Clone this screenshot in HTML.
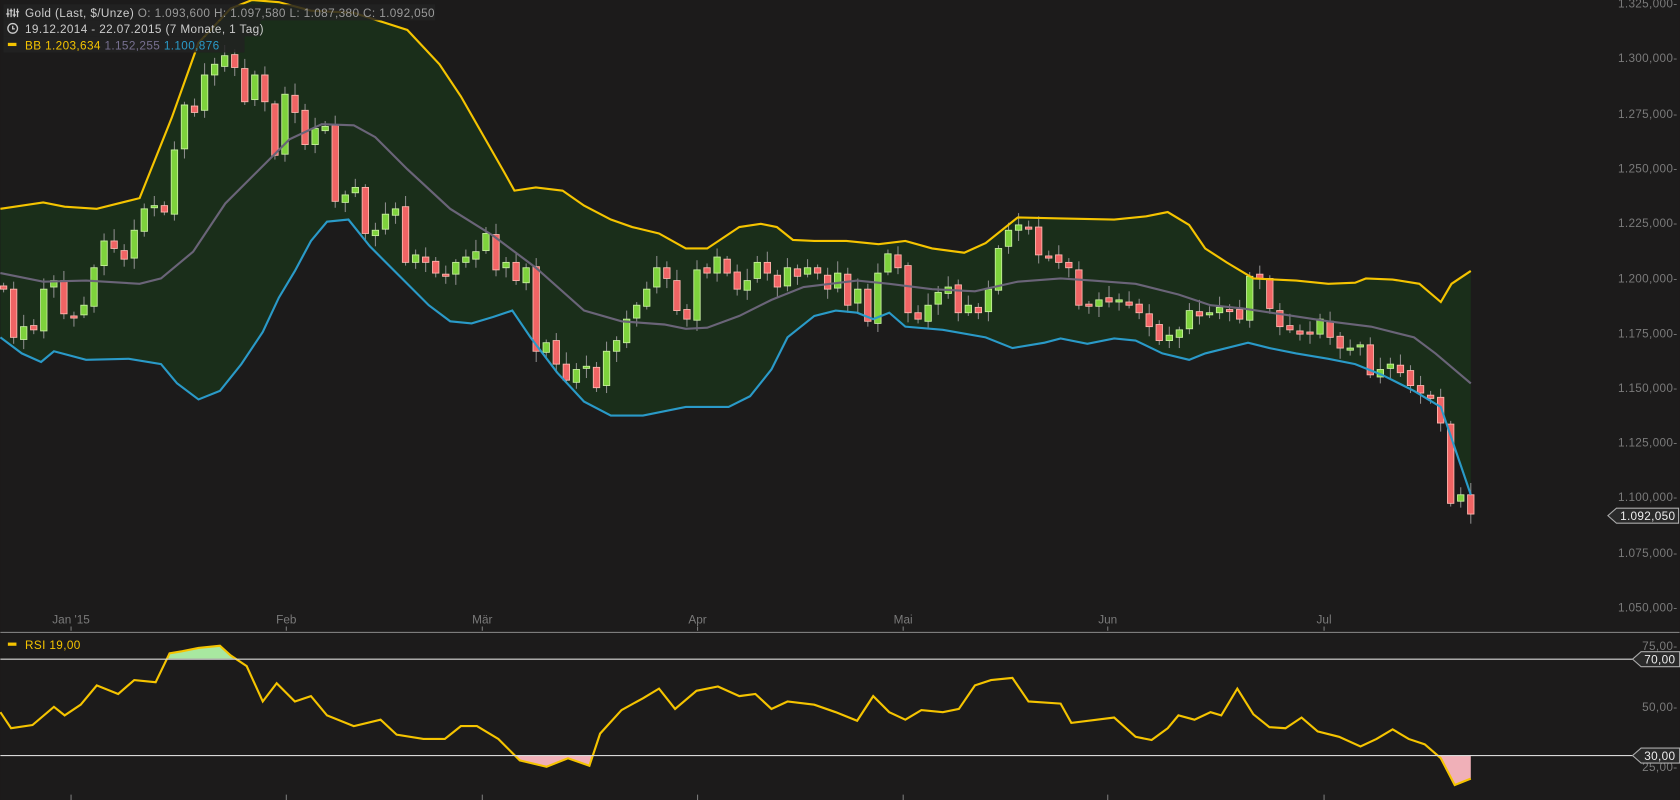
<!DOCTYPE html>
<html><head><meta charset="utf-8"><style>
html,body{margin:0;padding:0;background:#1c1b1b;overflow:hidden}
svg{display:block}
text{font-family:"Liberation Sans",sans-serif;}
</style></head><body>
<svg id="s" width="1680" height="800" viewBox="0 0 1568 747" xmlns="http://www.w3.org/2000/svg">
<rect width="1568" height="747" fill="#1c1b1b"/>
<g id="g"></g>
<line x1="0" y1="590.5" x2="1568" y2="590.5" stroke="#8a8a8a" stroke-width="1"/>
<line x1="0" y1="615.5" x2="1528" y2="615.5" stroke="#d8d8d8" stroke-width="1"/>
<line x1="0" y1="705.5" x2="1528" y2="705.5" stroke="#d8d8d8" stroke-width="1"/>
<g fill="#7a7a7a" font-size="11" text-anchor="end" letter-spacing="0.3">
<text x="1566" y="7">1.325,000-</text>
<text x="1566" y="58">1.300,000-</text>
<text x="1566" y="110">1.275,000-</text>
<text x="1566" y="161">1.250,000-</text>
<text x="1566" y="212">1.225,000-</text>
<text x="1566" y="264">1.200,000-</text>
<text x="1566" y="315">1.175,000-</text>
<text x="1566" y="366">1.150,000-</text>
<text x="1566" y="417">1.125,000-</text>
<text x="1566" y="468">1.100,000-</text>
<text x="1566" y="520">1.075,000-</text>
<text x="1566" y="571">1.050,000-</text>
<text x="1566" y="607">75,00-</text>
<text x="1566" y="664">50,00-</text>
<text x="1566" y="720">25,00-</text>
</g>
<g fill="#7a7a7a" font-size="11" text-anchor="middle">
<text x="66" y="582">Jan '15</text><text x="267" y="582">Feb</text><text x="450" y="582">Mär</text>
<text x="651" y="582">Apr</text><text x="843" y="582">Mai</text><text x="1034" y="582">Jun</text><text x="1236" y="582">Jul</text>
</g>
<g stroke="#7a7a7a"><path d="M66 585v4M267 585v4M450 585v4M651 585v4M843 585v4M1034 585v4M1236 585v4M66 742v5M267 742v5M450 742v5M651 742v5M843 742v5M1034 742v5M1236 742v5"/></g>
<g font-size="11" letter-spacing="0.3">
<path d="M1501 481.5l8-7h58v14h-58z" fill="#2a2a2a" stroke="#aaa"/>
<text x="1564" y="485.5" fill="#eee" text-anchor="end">1.092,050</text>
<path d="M1524 615.5l8-7h36v14h-36z" fill="#2a2a2a" stroke="#aaa"/>
<text x="1564" y="619.5" fill="#eee" text-anchor="end">70,00</text>
<path d="M1524 705.5l8-7h36v14h-36z" fill="#2a2a2a" stroke="#aaa"/>
<text x="1564" y="709.5" fill="#eee" text-anchor="end">30,00</text>
</g>
<rect x="3" y="4" width="403" height="15" fill="#222" fill-opacity="0.85"/>
<rect x="3" y="19" width="240" height="15" fill="#222" fill-opacity="0.85"/>
<rect x="3" y="34" width="225" height="15" fill="#222" fill-opacity="0.85"/>
<g font-size="11" letter-spacing="0.35">
<g stroke="#ccc" stroke-width="1.2" fill="none"><path d="M7 8v8M10 8v8M13 8v8M16 8v8M5.5 13h3M8.5 10h3M11.5 14h3M14.5 11h3"/><circle cx="11.5" cy="26.5" r="4.5"/><path d="M11.5 24v3h2"/></g>
<text x="23" y="16" fill="#ccc">Gold (Last, $/Unze)  <tspan fill="#9a9a9a">O: 1.093,600  H: 1.097,580  L: 1.087,380  C: 1.092,050</tspan></text>
<text x="23" y="31" fill="#ccc">19.12.2014 - 22.07.2015 (7 Monate, 1 Tag)</text>
<rect x="7" y="40" width="8" height="3" fill="#f5c400"/>
<text x="23" y="46" fill="#f5c400">BB  1.203,634  <tspan fill="#777090">1.152,255</tspan>  <tspan fill="#2a9ac8">1.100,876</tspan></text>
<rect x="7" y="600" width="8" height="3" fill="#f5c400"/>
<text x="23" y="606" fill="#f5c400">RSI  19,00</text>
</g>
</svg>
<script>
var N="http://www.w3.org/2000/svg",g=document.getElementById('g');
function el(t,a){var e=document.createElementNS(N,t);for(var k in a)e.setAttribute(k,a[k]);g.appendChild(e);return e;}
function P(a){var r=[];for(var i=0;i<a.length;i+=2)r.push([a[i],a[i+1]]);return r;}
var up=P([0,195,40,189,60,193,90,195,130,185,160,110,185,40,215,8,235,0,260,2,290,10,330,12,380,28,410,60,430,90,450,125,470,160,480,178,500,175,525,178,545,192,570,205,590,212,615,218,640,232,660,232,690,212,710,209,725,212,740,224,760,225,790,225,820,228,845,225,870,232,900,236,920,227,950,203,990,204,1040,205,1070,202,1090,198,1110,210,1125,232,1145,245,1170,260,1210,262,1240,265,1265,264,1275,260,1300,261,1325,265,1345,282,1355,265,1373,253]);
var mid=P([0,255,40,263,80,262,130,265,150,260,180,235,210,190,240,160,270,130,300,116,330,117,350,128,380,158,420,195,460,220,500,250,545,290,580,300,620,303,640,307,660,306,690,295,720,280,750,268,800,262,830,265,870,270,910,272,950,263,990,260,1020,262,1060,265,1100,275,1130,285,1160,288,1200,294,1240,300,1280,305,1320,315,1340,330,1373,358]);
var lo=P([0,315,20,330,38,338,50,328,80,336,120,335,150,340,165,358,185,373,205,365,225,340,245,310,260,278,275,253,290,225,305,207,325,205,345,230,370,255,400,285,420,300,440,302,460,296,478,290,495,315,520,348,545,375,570,388,600,388,640,380,680,380,700,370,720,345,735,315,760,295,780,290,800,292,815,298,830,292,845,305,880,308,920,315,945,325,975,320,990,316,1015,321,1040,316,1060,318,1085,330,1110,336,1125,330,1165,320,1185,325,1210,330,1240,335,1265,340,1290,350,1320,365,1345,380,1373,462]);
function s(p){return p.map(function(q){return q[0]+','+q[1]}).join(' ');}
el('polygon',{points:s(up)+' '+s(lo.slice().reverse()),fill:'#1a2e1a'});
var c=[270,315,305,308,270,262,293,295,285,250,225,232,242,215,195,192,198,140,98,105,70,60,52,63,95,70,95,145,88,105,135,120,118,188,182,175,218,215,200,195,245,238,245,255,258,245,240,235,218,252,245,262,250,328,320,340,355,345,342,362,328,318,298,285,270,250,260,290,298,252,255,240,255,270,262,245,255,268,250,258,250,255,270,255,285,270,300,255,237,250,292,298,285,273,268,292,285,292,270,232,215,210,213,238,240,245,250,285,285,280,282,280,285,292,305,318,313,308,290,295,292,287,290,298,258,260,288,305,308,312,312,298,315,325,325,322,350,345,340,348,360,367,372,395,470,462,480];
var dx=1370/(c.length-1);
for(var i=0;i<c.length;i++){
 var x=3+i*dx,o=i?c[i-1]+((i*7)%5-2):c[0]-3,cl=c[i];
 var t=Math.min(o,cl),b=Math.max(o,cl);if(b-t<2){b=t+2;}
 var w1=3+(i*13)%9,w2=3+(i*11)%8;
 el('line',{x1:x,y1:t-w1,x2:x,y2:b+w2,stroke:'#8a8a8a','stroke-width':1});
 var gr=cl<o;
 el('rect',{x:x-3,y:t,width:6,height:b-t,fill:gr?'#7ed23c':'#f06464',stroke:gr?'#c8f0a0':'#ffb8b0','stroke-width':0.8});
}
el('polyline',{points:s(mid),fill:'none',stroke:'#6a6478','stroke-width':2});
el('polyline',{points:s(up),fill:'none',stroke:'#f5c400','stroke-width':2});
el('polyline',{points:s(lo),fill:'none',stroke:'#2a9ac8','stroke-width':2});
var r=P([0,665,10,680,30,677,50,660,60,668,75,658,90,640,110,648,125,635,145,637,158,610,170,608,185,605,205,603,215,612,230,622,245,655,258,638,275,655,290,650,305,668,330,678,355,672,370,686,395,690,415,690,430,678,445,678,465,690,485,710,510,716,530,708,550,715,560,685,580,663,600,652,615,643,630,662,650,645,670,641,690,650,705,648,720,662,735,655,760,658,780,665,800,673,815,650,830,665,845,672,860,663,880,665,895,662,910,640,925,635,945,633,960,655,990,657,1000,675,1040,670,1060,688,1075,691,1090,680,1100,668,1115,672,1130,665,1140,668,1155,643,1170,667,1185,679,1200,680,1215,670,1230,683,1250,688,1270,697,1285,690,1300,681,1315,690,1330,695,1345,708,1358,733,1373,727]);
var sv=document.getElementById('s');
var d=document.createElementNS(N,'defs');d.innerHTML='<clipPath id="a"><rect x="0" y="0" width="1400" height="615"/></clipPath><clipPath id="b"><rect x="0" y="705" width="1400" height="60"/></clipPath>';sv.insertBefore(d,sv.firstChild);
var pts=s(r);
el('polygon',{points:'0,615 '+pts+' 1373,615',fill:'#a8e8a0','clip-path':'url(#a)'});
el('polygon',{points:'0,705 '+pts+' 1373,705',fill:'#f0b0b8','clip-path':'url(#b)'});
el('polyline',{points:pts,fill:'none',stroke:'#f5c400','stroke-width':2});
</script>
</body></html>
